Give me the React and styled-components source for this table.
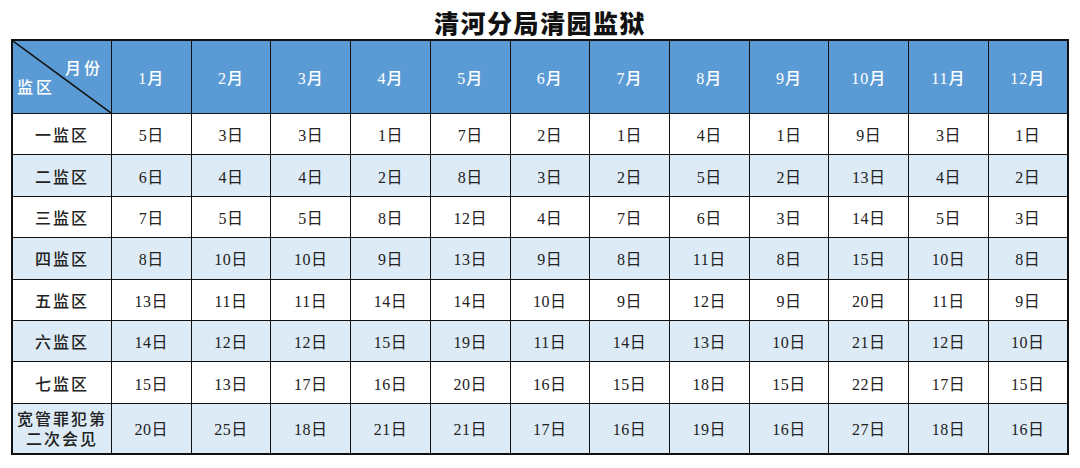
import React from 'react';
import styled, { createGlobalStyle } from 'styled-components';

const GlobalStyle = createGlobalStyle`
  html, body {
    margin: 0;
    padding: 0;
    background: #fff;
  }
  body {
    font-family: "Liberation Serif", "Noto Sans CJK SC", serif;
    color: #222;
  }
`;

const months = ['1月', '2月', '3月', '4月', '5月', '6月', '7月', '8月', '9月', '10月', '11月', '12月'];

const rows = [
  { name: '一监区', days: [5, 3, 3, 1, 7, 2, 1, 4, 1, 9, 3, 1] },
  { name: '二监区', days: [6, 4, 4, 2, 8, 3, 2, 5, 2, 13, 4, 2] },
  { name: '三监区', days: [7, 5, 5, 8, 12, 4, 7, 6, 3, 14, 5, 3] },
  { name: '四监区', days: [8, 10, 10, 9, 13, 9, 8, 11, 8, 15, 10, 8] },
  { name: '五监区', days: [13, 11, 11, 14, 14, 10, 9, 12, 9, 20, 11, 9] },
  { name: '六监区', days: [14, 12, 12, 15, 19, 11, 14, 13, 10, 21, 12, 10] },
  { name: '七监区', days: [15, 13, 17, 16, 20, 16, 15, 18, 15, 22, 17, 15] },
  { name: '宽管罪犯第二次会见', days: [20, 25, 18, 21, 21, 17, 16, 19, 16, 27, 18, 16], tall: true },
];

const Page = styled.div`
  width: 1080px;
  height: 468px;
  display: flex;
  flex-direction: column;
  align-items: flex-start;
`;

const Title = styled.h1`
  margin: 0;
  width: 1080px;
  height: 39px;
  line-height: 44px;
  text-align: center;
  font-family: "Noto Sans CJK SC", sans-serif;
  font-size: 25px;
  font-weight: 900;
  letter-spacing: 1.5px;
  color: #111;
`;

const Table = styled.table`
  margin-left: 11px;
  width: 1058px;
  table-layout: fixed;
  border-collapse: collapse;
  border: 2px solid #111;
`;

const HeadCell = styled.th`
  height: 72px;
  padding: 0;
  background: #5b9bd5;
  color: #fff;
  font-size: 16px;
  font-weight: 500;
  letter-spacing: 1px;
  border: 1.5px solid #111;
  text-align: center;
`;

const CornerCell = styled(HeadCell)`
  position: relative;
  width: 98px;
`;

const CornerTop = styled.span`
  position: absolute;
  right: 8px;
  top: 14px;
  letter-spacing: 3px;
`;

const CornerBottom = styled.span`
  position: absolute;
  left: 4px;
  bottom: 15px;
  letter-spacing: 3px;
`;

const Diagonal = styled.svg`
  position: absolute;
  left: 0;
  top: 0;
  width: 100%;
  height: 100%;
`;

const Row = styled.tr`
  background: ${(p) => (p.$shaded ? '#ddebf7' : '#fff')};
  height: ${(p) => (p.$tall ? '50.5px' : '41.4px')};
`;

const LabelCell = styled.td`
  padding: 0 2px;
  border: 1.5px solid #111;
  text-align: center;
  font-family: "Noto Sans CJK SC", sans-serif;
  font-size: 16px;
  font-weight: 500;
  line-height: 20px;
  color: #222;
  letter-spacing: 2px;
`;

const Cell = styled.td`
  padding: 0;
  border: 1.5px solid #111;
  text-align: center;
  font-size: 16px;
  letter-spacing: 0.5px;
  color: #222;
`;

export default function App() {
  return (
    <Page>
      <GlobalStyle />
      <Title>清河分局清园监狱</Title>
      <Table>
        <thead>
          <tr>
            <CornerCell>
              <Diagonal viewBox="0 0 100 100" preserveAspectRatio="none">
                <line x1="0" y1="0" x2="100" y2="100" stroke="#111" strokeWidth="1.5" vectorEffect="non-scaling-stroke" />
              </Diagonal>
              <CornerTop>月份</CornerTop>
              <CornerBottom>监区</CornerBottom>
            </CornerCell>
            {months.map((m) => (
              <HeadCell key={m}>{m}</HeadCell>
            ))}
          </tr>
        </thead>
        <tbody>
          {rows.map((r, i) => (
            <Row key={r.name} $shaded={i % 2 === 1} $tall={r.tall}>
              <LabelCell>{r.name}</LabelCell>
              {r.days.map((d, j) => (
                <Cell key={j}>{d}日</Cell>
              ))}
            </Row>
          ))}
        </tbody>
      </Table>
    </Page>
  );
}
